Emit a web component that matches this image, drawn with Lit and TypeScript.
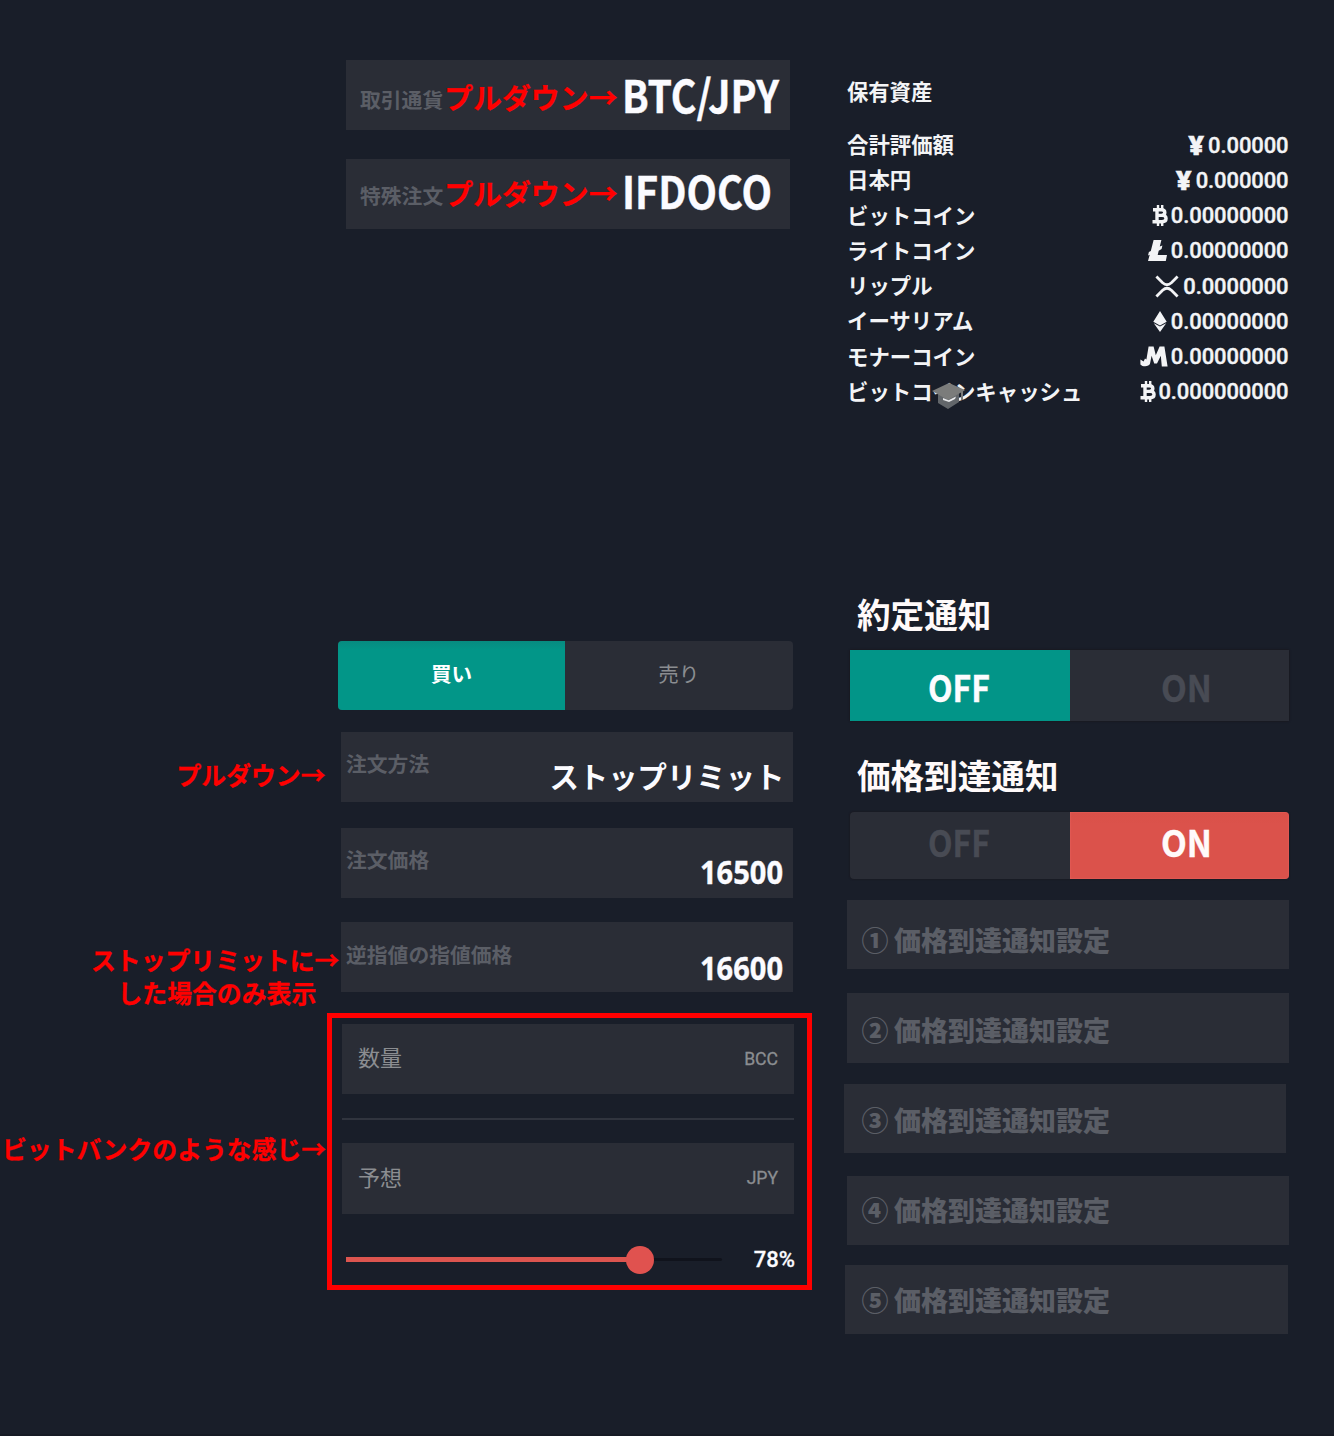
import { LitElement, html, svg, css, type TemplateResult } from "lit";
import { customElement, property } from "lit/decorators.js";

/** Condensed Latin caption: real text fitted to a given advance width. */
@customElement("fit-text")
class FitText extends LitElement {
  @property() text = "";
  @property({ type: Number }) size = 32;
  @property({ type: Number }) width = 80;
  static styles = css`
    :host { display: block; flex: none; line-height: 0; }
    svg { display: block; overflow: visible; }
    text { font-family: "Noto Sans CJK JP", sans-serif; font-weight: 700; fill: currentColor; stroke: currentColor; stroke-width: 0.4px; }
    .digits { font-family: "Noto Sans", "Open Sans", sans-serif; }
  `;
  render() {
    const kind = /^[0-9]+$/.test(this.text) ? "digits" : "";
    return html`<svg width=${this.width} height=${this.size} role="img">
      <text class=${kind} x="0" y=${this.size} font-size=${this.size} textLength=${this.width} lengthAdjust="spacingAndGlyphs">${this.text}</text>
    </svg>`;
  }
}

const bitcoin = svg`<g fill="none" stroke="currentColor">
  <path stroke-width="3.4" d="M1 4.7H9.3C14 4.7 14 10.4 9.3 10.4H5.6H10C15.4 10.4 15.4 16.7 10 16.7H0.5M5 4.7V16.7"/>
  <path stroke-width="2.4" d="M6 0V4M10.2 0V4M6 17V21M10.2 17V21"/></g>`;

const icons: Record<string, { w: number; body: TemplateResult }> = {
  btc: { w: 15, body: bitcoin as TemplateResult },
  ltc: {
    w: 19,
    body: svg`<path fill="currentColor" d="M5.6 0H13.4L11.8 6.6L14.4 5.6L13.6 9.1L10.7 10.7L9.7 15H19L17.8 21H0L1.7 14.8L0 15.6L0.9 12L2.8 11Z"/>` as TemplateResult,
  },
  xrp: {
    w: 24,
    body: svg`<path fill="none" stroke="currentColor" stroke-width="2.8" d="M1.4 0.6L7.6 6.8Q12 10.8 16.4 6.8L22.6 0.6M1.4 20.4L7.6 14.2Q12 10.2 16.4 14.2L22.6 20.4"/>` as TemplateResult,
  },
  eth: {
    w: 14,
    body: svg`<path fill="currentColor" d="M7 0L13.7 10.8L7 14.4L0.3 10.8ZM0.8 12.2L7 15.4L13.2 12.2L7 21Z"/>` as TemplateResult,
  },
  mona: {
    w: 28,
    body: svg`<path fill="currentColor" d="M8.6 0.6H13.6L15.8 9.2L19.6 0.6H24.4L27.6 20.4H21.8L20.8 9.8L17 17.6H14.2L11.6 9.8L10 17.8C9.2 20.6 2.8 21.4 0.4 18.4L0.4 13.6L3.6 15.4L5 12.6L6.4 13.6Z"/>` as TemplateResult,
  },
  bch: { w: 15, body: bitcoin as TemplateResult },
};

interface Asset { name: string; icon: string; amount: string; gap: number; }

const assets: Asset[] = [
  { name: "合計評価額", icon: "yen", amount: "0.00000", gap: 4 },
  { name: "日本円", icon: "yen", amount: "0.000000", gap: 4 },
  { name: "ビットコイン", icon: "btc", amount: "0.00000000", gap: 4 },
  { name: "ライトコイン", icon: "ltc", amount: "0.00000000", gap: 4 },
  { name: "リップル", icon: "xrp", amount: "0.0000000", gap: 4 },
  { name: "イーサリアム", icon: "eth", amount: "0.00000000", gap: 4 },
  { name: "モナーコイン", icon: "mona", amount: "0.00000000", gap: 3 },
  { name: "ビットコインキャッシュ", icon: "bch", amount: "0.000000000", gap: 3 },
];

@customElement("asset-list")
class AssetList extends LitElement {
  static styles = css`
    :host { display: block; color: #f3f4f6; font-family: "Noto Sans CJK JP", sans-serif; }
    .title { font-size: 21.3px; line-height: 22px; font-weight: 700; padding-bottom: 25.5px; }
    .row { display: flex; justify-content: space-between; align-items: center; height: 35.25px; padding-right: 1.5px; }
    .name { position: relative; font-size: 21.4px; line-height: 24px; font-weight: 600; white-space: nowrap; margin-bottom: 2px; }
    .value { display: flex; align-items: center; font-family: Roboto, sans-serif; }
    .amount { font-size: 22px; line-height: 24px; font-weight: 500; letter-spacing: -0.1px; margin-top: 1px; -webkit-text-stroke: 0.4px currentColor; }
    .yen { font-family: "Noto Sans", sans-serif; font-weight: 900; font-size: 27px; line-height: 24px; -webkit-text-stroke: 0.5px currentColor; }
    svg { display: block; overflow: visible; }
    .cap { position: absolute; left: 85px; top: 4px; }
  `;
  render() {
    return html`
      <div class="title">保有資産</div>
      ${assets.map((a) => html`
        <div class="row">
          <span class="name">${a.name}${a.icon === "bch"
            ? html`<svg class="cap" width="33" height="26" viewBox="0 0 33 26">
                <path fill="#62666a" d="M6 11L17 15L27 10V19L16 26L6 20Z"/>
                <path fill="#7b7c7b" d="M0 8L17 0L33 7L31 8.5V17H29V9.5L16 17Z"/>
                <path fill="#e8e9eb" d="M11 15L16.5 17.2L24 13.6L23 16L17 19L11 17Z"/></svg>`
            : ""}</span>
          <span class="value">
            ${a.icon === "yen"
              ? html`<span class="yen" style="margin-right:${a.gap}px">¥</span>`
              : html`<svg width=${icons[a.icon].w} height="21" style="margin-right:${a.gap}px">${icons[a.icon].body}</svg>`}
            <span class="amount">${a.amount}</span>
          </span>
        </div>`)}
    `;
  }
}

@customElement("app-root")
class AppRoot extends LitElement {
  static styles = css`
    :host { display: block; }
    * { box-sizing: border-box; }
    .page { display: flex; width: 1334px; height: 1436px; overflow: hidden; background: #191e29; border-bottom: 2px solid #161a24;
      font-family: "Noto Sans CJK JP", sans-serif; font-weight: 700; color: #fbfbff; white-space: nowrap; }
    .notes { width: 338px; flex: none; color: #f00; font-size: 24.85px; line-height: 24.8px; padding-top: 762px; -webkit-text-stroke: 0.3px #f00; }
    .notes p { margin: 0; }
    .n1 { padding-left: 176.5px; }
    .n2 { padding: 156px 0 0 91px; line-height: 33.5px; }
    .n2 span { display: block; padding-left: 26.5px; }
    .n3 { padding: 126.5px 0 0 2px; }
    .order { width: 509px; flex: none; padding-top: 60px; }
    .alerts { width: 443px; flex: none; padding-top: 80px; }
    .field { display: flex; align-items: flex-start; background: #2a2d36; height: 70px; }
    .label { color: #5b5e66; font-size: 20.8px; line-height: 20.8px; }
    .push { margin-left: auto; }
    .pick { width: 444px; margin-left: 8px; padding-left: 14px; }
    .pick .label { margin-top: 29px; }
    .pull { color: #f00; font-size: 28.9px; line-height: 28.8px; margin: 22px 0 0 1px; -webkit-text-stroke: 0.3px #f00; }
    .pick fit-text { margin: 8px 0 0 4px; }
    .pick.second { margin-top: 29px; }
    .pick.second .label { margin-top: 25.7px; }
    .pick.second .pull { margin-top: 19px; }
    .pick.second fit-text { margin-top: 4.5px; }
    .tabs { display: flex; width: 454.5px; height: 69.5px; margin-top: 411.5px; border-radius: 4px; overflow: hidden; background: #2a2d36; }
    .tab { flex: 1; text-align: center; font-size: 20.6px; line-height: 64px; color: #8b8d91; font-weight: 400; }
    .tab.buy { background: linear-gradient(#078b80, #029688 9px); color: #fff; font-weight: 700; }
    .entry { width: 452px; margin: 26px 0 0 3px; padding: 0 8.5px 0 5px; }
    .entry.first { margin-top: 21.5px; }
    .entry.third { margin-top: 24px; }
    .entry .label { margin-top: 21px; }
    .entry.third .label { margin-top: 22.6px; }
    .entry fit-text { margin-top: 23px; margin-right: 2px; }
    .entry.third fit-text { margin-top: 25px; }
    .method { font-size: 29.4px; line-height: 29.4px; margin-top: 29px; }
    .frame { width: 485px; height: 277px; border: 5px solid #f00; margin: 21px 0 0 -11px; padding: 6px 12px 0 10px; }
    .amount { align-items: center; width: 452px; height: 70.5px; padding: 0 16px 5px 16px; font-weight: 400; color: #8b8d91; }
    .amount .cap { font-size: 22px; line-height: 24px; }
    .amount .unit { font-family: Roboto, sans-serif; font-size: 17.6px; line-height: 20px; margin-top: 5px; -webkit-text-stroke: 0.3px currentColor; }
    .rule { width: 452px; height: 2px; background: #30343e; margin: 23.5px 0; }
    .slider { display: flex; align-items: center; height: 28px; margin-top: 32px; padding-left: 4px; }
    .track { display: flex; align-items: center; width: 376px; height: 3px; background: #10131c; border-radius: 2px; }
    .fill { height: 5px; background: #dc554f; }
    .knob { width: 28px; height: 28px; flex: none; border-radius: 50%; background: #e0524f; margin-left: -13px; }
    .pct { margin-left: 32px; font-family: Roboto, sans-serif; font-weight: 500; font-size: 22px; line-height: 28px; -webkit-text-stroke: 0.3px currentColor; }
    h2 { margin: 0; padding-left: 10px; font-size: 33.6px; line-height: 33.6px; font-weight: 700; color: #fffafa; }
    .exec { margin-top: 187px; }
    .switch { display: flex; width: 439px; height: 71px; margin: 20px 0 0 3px; background: #2a2d36; box-shadow: 0 0 2px #191317; }
    .side { width: 50%; flex: none; display: flex; color: #484b54; }
    .off { padding-left: 78px; }
    .on { padding-left: 91px; }
    .side fit-text { margin-top: 14.7px; }
    .teal { background: #029588; color: #fcfcff; }
    .price { margin-top: 37px; }
    .reach { height: 67.5px; border-radius: 4px; overflow: hidden; }
    .reach fit-text { margin-top: 8.2px; }
    .coral { background: linear-gradient(#d95048, #db524b 12px); box-shadow: inset 0 0 2px #f06a68; color: #fffafa; }
    .item { color: #5b5e66; font-size: 27px; line-height: 27px; }
    .item span { display: flex; gap: 5.5px; }
  `;

  private items = [
    { mark: "①", x: 0, gap: 21, w: 442, h: 69, top: 26 },
    { mark: "②", x: 0, gap: 24, w: 442, h: 70, top: 23 },
    { mark: "③", x: -3, gap: 21, w: 442, h: 69, top: 22 },
    { mark: "④", x: 0, gap: 23, w: 442, h: 69, top: 20 },
    { mark: "⑤", x: -2, gap: 20, w: 443, h: 69, top: 21.3 },
  ];

  render() {
    return html`
      <div class="page">
        <div class="notes">
          <p class="n1">プルダウン→</p>
          <p class="n2">ストップリミットに→<span>した場合のみ表示</span></p>
          <p class="n3">ビットバンクのような感じ→</p>
        </div>

        <div class="order">
          <div class="field pick">
            <span class="label">取引通貨</span><span class="pull">プルダウン→</span>
            <fit-text text="BTC/JPY" size="45" width="157"></fit-text>
          </div>
          <div class="field pick second">
            <span class="label">特殊注文</span><span class="pull">プルダウン→</span>
            <fit-text text="IFDOCO" size="45" width="150"></fit-text>
          </div>

          <div class="tabs"><div class="tab buy">買い</div><div class="tab">売り</div></div>

          <div class="field entry first"><span class="label">注文方法</span><span class="method push">ストップリミット</span></div>
          <div class="field entry"><span class="label">注文価格</span><fit-text class="push" text="16500" size="33" width="83"></fit-text></div>
          <div class="field entry third"><span class="label">逆指値の指値価格</span><fit-text class="push" text="16600" size="33" width="83"></fit-text></div>

          <div class="frame">
            <div class="field amount"><span class="cap">数量</span><span class="unit push">BCC</span></div>
            <div class="rule"></div>
            <div class="field amount"><span class="cap">予想</span><span class="unit push">JPY</span></div>
            <div class="slider">
              <div class="track"><div class="fill" style="width:78%"></div><div class="knob"></div></div>
              <span class="pct">78%</span>
            </div>
          </div>
        </div>

        <div class="alerts">
          <asset-list></asset-list>
          <h2 class="exec">約定通知</h2>
          <div class="switch">
            <div class="side off teal"><fit-text text="OFF" size="37" width="62"></fit-text></div>
            <div class="side on"><fit-text text="ON" size="37" width="51"></fit-text></div>
          </div>
          <h2 class="price">価格到達通知</h2>
          <div class="switch reach">
            <div class="side off"><fit-text text="OFF" size="37" width="62"></fit-text></div>
            <div class="side on coral"><fit-text text="ON" size="37" width="51"></fit-text></div>
          </div>
          ${this.items.map((i) => html`
            <div class="field item" style="width:${i.w}px;margin:${i.gap}px 0 0 ${i.x}px;height:${i.h}px;padding:${i.top}px 0 0 ${14.5 - i.x}px">
              <span><b>${i.mark}</b><b>価格到達通知設定</b></span>
            </div>`)}
        </div>
      </div>
    `;
  }
}
